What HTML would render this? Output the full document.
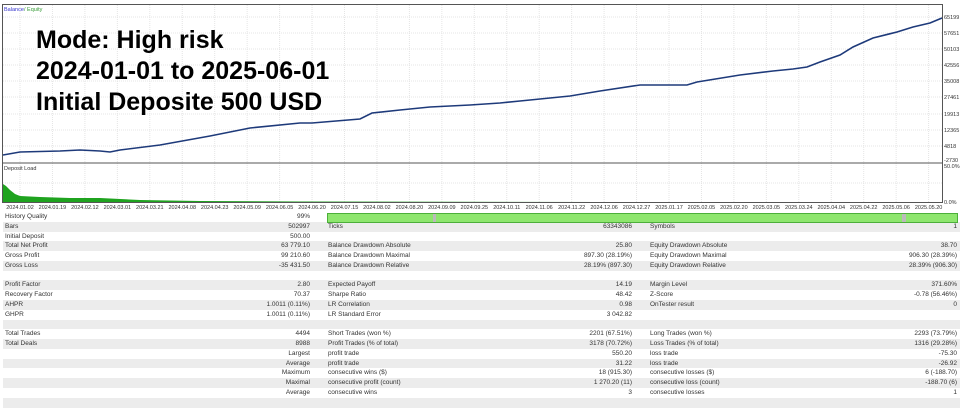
<!DOCTYPE html>
<html><head><meta charset="utf-8"><style>
body{margin:0;width:960px;height:404px;background:#fff;overflow:hidden;position:relative;font-family:"Liberation Sans",sans-serif}
.t{position:absolute;left:36px;font-weight:bold;font-size:25px;line-height:25px;color:#000;white-space:nowrap;letter-spacing:0px}
.row{position:absolute;left:3px;width:957px;height:9.78px;font-size:6.5px;color:#333;line-height:9.78px}
.g{background:#ececec}
.row span{position:absolute;white-space:nowrap}
.l1{left:2px}.v1{right:650px}.l2{left:325px}.v2{right:328px}.l3{left:647px}.v3{right:3px}
</style></head><body>
<svg width="960" height="212" style="position:absolute;left:0;top:0" font-family="Liberation Sans" font-size="5.5">
<rect x="2.5" y="4.5" width="940" height="198" fill="#fff" stroke="#555"/>
<g stroke="#e4e4e4" stroke-dasharray="1,1">
<line x1="3" x2="942" y1="17" y2="17"/><line x1="3" x2="942" y1="33" y2="33"/><line x1="3" x2="942" y1="49" y2="49"/><line x1="3" x2="942" y1="65" y2="65"/><line x1="3" x2="942" y1="81" y2="81"/><line x1="3" x2="942" y1="97" y2="97"/><line x1="3" x2="942" y1="114" y2="114"/><line x1="3" x2="942" y1="130" y2="130"/><line x1="3" x2="942" y1="146" y2="146"/>
<line x1="3" x2="942" y1="183" y2="183"/>
</g>
<g id="vg" stroke="#e4e4e4" stroke-dasharray="1,1"></g>
<line x1="3" x2="942" y1="163" y2="163" stroke="#555"/>
<polygon fill="#1fa31f" points="3,202 3,184 6,186 10,190 15,194 20,196 40,197 70,198 100,198 140,200 200,201 300,201.5 600,202 941,202"/>
<polyline fill="none" stroke="#1e3a7a" stroke-width="1.6" points="3,155 20,152 60,151 80,150 100,151 110,152 120,150 160,145 210,136 250,128 300,123 312,123 360,119 372,113 400,110 430,107 470,105 500,103 520,101 560,97 570,96 600,91 640,85 687,85 697,82 740,75 773,71 793,69 807,67 820,62 840,55 853,47 873,38 897,32 913,27 930,23 942,18"/>
<text x="4" y="11" fill="#33c">Balance</text><text x="24" y="11" fill="#393">/ Equity</text>
<text x="4" y="170" fill="#333">Deposit Load</text>
<g fill="#333">
<text x="944" y="19">65199</text><text x="944" y="35">57651</text><text x="944" y="51">50103</text><text x="944" y="67">42556</text><text x="944" y="83">35008</text><text x="944" y="99">27461</text><text x="944" y="116">19913</text><text x="944" y="132">12365</text><text x="944" y="148">4818</text><text x="944" y="162">-2730</text><text x="944" y="168">50.0%</text><text x="944" y="204">0.0%</text>
</g>
<g fill="#333" text-anchor="middle" id="xl"></g>
</svg>
<div class="t" style="top:28px">Mode: High risk</div>
<div class="t" style="top:59px">2024-01-01 to 2025-06-01</div>
<div class="t" style="top:90px">Initial Deposite 500 USD</div>
<div id="tbl"></div>
<script>
var d=["2024.01.02","2024.01.19","2024.02.12","2024.03.01","2024.03.21","2024.04.08","2024.04.23","2024.05.09","2024.06.05","2024.06.20","2024.07.15","2024.08.02","2024.08.20","2024.09.09","2024.09.25","2024.10.11","2024.11.06","2024.11.22","2024.12.06","2024.12.27","2025.01.17","2025.02.05","2025.02.20","2025.03.05","2025.03.24","2025.04.04","2025.04.22","2025.05.06","2025.05.20"];
var ns="http://www.w3.org/2000/svg",xl=document.getElementById("xl"),vg=document.getElementById("vg");
d.forEach(function(s,i){var x=20+i*32.45;var t=document.createElementNS(ns,"text");t.setAttribute("x",x);t.setAttribute("y",209);t.textContent=s;xl.appendChild(t);
var l=document.createElementNS(ns,"line");l.setAttribute("x1",x);l.setAttribute("x2",x);l.setAttribute("y1",5);l.setAttribute("y2",202);vg.appendChild(l);});
var R=[["History Quality","99%","","","",""],["Bars","502997","Ticks","63343086","Symbols","1"],["Initial Deposit","500.00","","","",""],["Total Net Profit","63 779.10","Balance Drawdown Absolute","25.80","Equity Drawdown Absolute","38.70"],["Gross Profit","99 210.60","Balance Drawdown Maximal","897.30 (28.19%)","Equity Drawdown Maximal","906.30 (28.39%)"],["Gross Loss","-35 431.50","Balance Drawdown Relative","28.19% (897.30)","Equity Drawdown Relative","28.39% (906.30)"],["","","","","",""],["Profit Factor","2.80","Expected Payoff","14.19","Margin Level","371.60%"],["Recovery Factor","70.37","Sharpe Ratio","48.42","Z-Score","-0.78 (56.46%)"],["AHPR","1.0011 (0.11%)","LR Correlation","0.98","OnTester result","0"],["GHPR","1.0011 (0.11%)","LR Standard Error","3 042.82","",""],["","","","","",""],["Total Trades","4494","Short Trades (won %)","2201 (67.51%)","Long Trades (won %)","2293 (73.79%)"],["Total Deals","8988","Profit Trades (% of total)","3178 (70.72%)","Loss Trades (% of total)","1316 (29.28%)"],["","Largest","profit trade","550.20","loss trade","-75.30"],["","Average","profit trade","31.22","loss trade","-26.92"],["","Maximum","consecutive wins ($)","18 (915.30)","consecutive losses ($)","6 (-188.70)"],["","Maximal","consecutive profit (count)","1 270.20 (11)","consecutive loss (count)","-188.70 (6)"],["","Average","consecutive wins","3","consecutive losses","1"],["","","","","",""]];
var h="";R.forEach(function(r,i){h+='<div class="row'+(i%2?' g':'')+'" style="top:'+(212+i*9.78)+'px"><span class="l1">'+r[0]+'</span><span class="v1">'+r[1]+'</span><span class="l2">'+r[2]+'</span><span class="v2">'+r[3]+'</span><span class="l3">'+r[4]+'</span><span class="v3">'+r[5]+'</span></div>';});
h+='<div style="position:absolute;left:327px;top:213px;width:629px;height:8px;background:#8ee66e;border:1px solid #4caf3a"><div style="position:absolute;left:105px;top:0;width:3px;height:8px;background:#bbb"></div><div style="position:absolute;left:574px;top:0;width:4px;height:8px;background:#bbb"></div></div>';
document.getElementById("tbl").innerHTML=h;
</script>
</body></html>
